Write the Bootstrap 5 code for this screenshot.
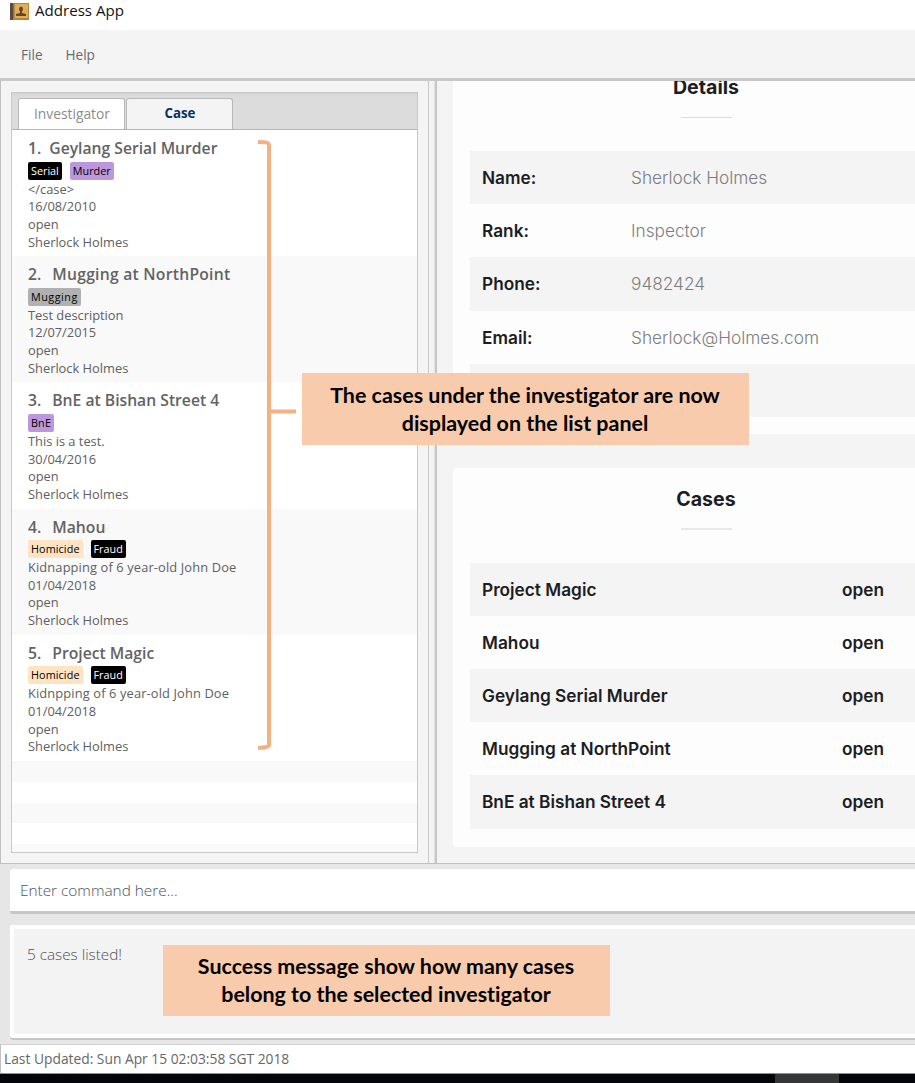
<!DOCTYPE html>
<html lang="en">
<head>
<meta charset="utf-8">
<meta name="viewport" content="width=device-width, initial-scale=1">
<title>Address App</title>
<link href="https://cdn.jsdelivr.net/npm/bootstrap@5.3.0/dist/css/bootstrap.min.css" rel="stylesheet">
<style>
body{font-family:"Open Sans","Noto Sans",sans-serif;font-size:13px;color:#606060;background:#e6e6e6;width:915px;height:1083px;overflow:hidden;line-height:1}
.titlebar{height:30px;background:#fff;color:#111;font-size:15.1px;padding:0 0 8px 10px;gap:5px}
.menubar{height:51px;background:#f4f4f4;border-bottom:3px solid #c8c8c8;padding:1px 0 0 21px;font-size:13.6px;color:#6a6a6a;gap:23px}
.workspace{height:783px;border-bottom:1px solid #bfbfbf;background:#f4f4f4}
.list-side{width:429px;padding:11px 10px 0 10px;border-left:1px solid #c0c0c0;border-right:1px solid #c8c8c8}
.tab-box{height:761px;border:1px solid #c8c8c8;background:#fff;overflow:hidden}
.tab-head{height:37px;background:linear-gradient(#d5d5d5,#dcdcdc 4px);border-bottom:1px solid #b5b5b5;padding-left:6px;gap:1px}
.tab-item{width:107px;height:31px;border:1px solid #b8b8b8;border-bottom:0;border-radius:3px 3px 0 0;background:#fff;font-size:13.8px;color:#8c8c8c;padding:0 0 0 1px}
.tab-item.current{background:#f4f4f4;color:#0a3060;font-weight:700;font-size:13.3px}
.case-cell{height:126.2px;padding:8px 0 0 16px}
.case-cell:nth-child(even){background:#f9f9f9}
.case-title{font-size:15.7px;font-weight:600;line-height:21px;height:23.5px;color:#636363}
.case-no{margin-right:11px}
.case-no.tight{margin-right:8px}
.spread{letter-spacing:.25px}
.tag{height:18px;line-height:18px;border-radius:2px;padding:0 3px;font-size:10.8px;color:#000}
.tag-wide{letter-spacing:.15px}
.tag-black{background:#000;color:#fff}.tag-purple{background:#bc97dc}.tag-grey{background:#b1b1b1;letter-spacing:.5px}.tag-peach{background:#ffe3c3;letter-spacing:.1px}
.case-line{line-height:17.7px;height:17.7px;font-size:12.85px;position:relative;top:1px}
.description{letter-spacing:.13px}
.filler{height:20.8px}.filler:nth-child(even){background:#f9f9f9}
.divider{width:8px;background:linear-gradient(90deg,#f4f4f4 70%,#dedede);border-right:2px solid #c6c6c6}
.browser{font-family:Inter,"Open Sans",sans-serif;color:#1c1d22;padding-left:16px;border-radius:0 0 0 3px;overflow:hidden}
.panel{width:507px;background:#fdfdfd;padding:0 0 0 17px}
.panel-a{height:353px}
.panel-b{height:379px;margin-top:34px;border-radius:4px}
.panel-title{width:472px;font-weight:700;font-size:19.6px;line-height:26px}
.title-a{height:36px;line-height:12px}
.title-b{height:60px;padding-top:18px}
.rule{width:51px;height:1px;background:#dedede;margin:0 0 33px 211px}
.rule.thick{height:2px;background:#e8e8e8;margin-bottom:32.7px}
.panel-row{height:53.2px;padding-left:12px;font-size:17.25px;font-weight:600}
.panel-row:nth-child(odd){background:#f4f4f4}
.label-col{width:149px}.name-col{width:360px}
.value-text{font-weight:300;color:#7d7d7d}
.command{height:45px;margin:5px 0 0 10px;background:#fff;border-bottom:3px solid #c6c6c6;border-radius:3px 0 0 3px;padding:2px 0 0 10px;font-size:15.35px;font-weight:300;color:#4b545c}
.result{height:113px;margin:11px 0 0 10px;background:#f3f3f3;border:4px solid #fff;border-right:0;border-radius:3px 0 0 3px;box-shadow:0 2px #c6c6c6;font-size:15.3px;font-weight:300;color:#505050;padding:18px 0 0 13px}
.statusbar{height:30px;margin-top:6px;background:#fff;border-top:1px solid #d0d0d0;border-left:1px solid #c0c0c0;border-bottom:1px solid #8f8f96;padding-left:3px;font-size:13.8px;color:#666}
.taskbar{height:10px;background:#02050a;padding-left:775px}
.task{width:64px;height:10px;background:#343638}
.callout{position:absolute;width:447px;background:#f8cbad;color:#000;font:700 21.45px/28px Lato,sans-serif;font-variant-ligatures:none;text-align:center}
.callout-a{left:302px;top:373px;height:72px;padding:8px 1px 0 0}
.callout-b{left:163px;top:945px;height:71px;padding:7px 1px 0 0}
.bracket{position:absolute;left:256px;top:138px}
</style>
</head>
<body class="position-relative d-flex flex-column">
<header class="titlebar d-flex align-items-center flex-shrink-0">
<svg width="20" height="18" viewBox="0 0 20 18"><path d="M0 1h4v17H0z" fill="#594b42"/><path d="M3 1h16v17H3z" fill="#b98235"/><path d="M4 2h14v14H4z" fill="#e0ae5a"/><path d="M4 2v14" stroke="#8d6739"/><ellipse cx="11" cy="7" rx="2" ry="2.500" fill="#654523"/><path d="M10 8h2v3l4 1v2H6v-2l4-1z" fill="#654523"/></svg>
<span>Address App</span>
</header>
<nav class="menubar d-flex align-items-center flex-shrink-0"><span>File</span><span>Help</span></nav>
<main class="workspace d-flex flex-shrink-0">
<section class="list-side flex-shrink-0">
<div class="tab-box">
<div class="tab-head d-flex align-items-end"><div class="tab-item d-flex align-items-center justify-content-center">Investigator</div><div class="tab-item current d-flex align-items-center justify-content-center">Case</div></div>
<div>
<article class="case-cell"><div class="case-title"><span class="case-no tight">1.</span>Geylang Serial Murder</div><div class="d-flex gap-2"><span class="tag tag-black">Serial</span><span class="tag tag-purple">Murder</span></div><div class="case-line">&lt;/case&gt;</div><div class="case-line">16/08/2010</div><div class="case-line">open</div><div class="case-line">Sherlock Holmes</div></article>
<article class="case-cell"><div class="case-title"><span class="case-no">2.</span><span class="spread">Mugging at NorthPoint</span></div><div class="d-flex gap-2"><span class="tag tag-grey">Mugging</span></div><div class="case-line">Test description</div><div class="case-line">12/07/2015</div><div class="case-line">open</div><div class="case-line">Sherlock Holmes</div></article>
<article class="case-cell"><div class="case-title"><span class="case-no">3.</span>BnE at Bishan Street 4</div><div class="d-flex gap-2"><span class="tag tag-purple tag-wide">BnE</span></div><div class="case-line">This is a test.</div><div class="case-line">30/04/2016</div><div class="case-line">open</div><div class="case-line">Sherlock Holmes</div></article>
<article class="case-cell"><div class="case-title"><span class="case-no">4.</span>Mahou</div><div class="d-flex gap-2"><span class="tag tag-peach">Homicide</span><span class="tag tag-black">Fraud</span></div><div class="case-line description">Kidnapping of 6 year-old John Doe</div><div class="case-line">01/04/2018</div><div class="case-line">open</div><div class="case-line">Sherlock Holmes</div></article>
<article class="case-cell"><div class="case-title"><span class="case-no">5.</span>Project Magic</div><div class="d-flex gap-2"><span class="tag tag-peach">Homicide</span><span class="tag tag-black">Fraud</span></div><div class="case-line description">Kidnpping of 6 year-old John Doe</div><div class="case-line">01/04/2018</div><div class="case-line">open</div><div class="case-line">Sherlock Holmes</div></article>
<div class="filler"></div><div class="filler"></div><div class="filler"></div><div class="filler"></div><div class="filler"></div>
</div>
</div>
</section>
<div class="divider flex-shrink-0"></div>
<section class="browser flex-grow-1">
<div class="panel panel-a">
<div class="panel-title title-a text-center">Details</div><div class="rule"></div>
<div>
<div class="panel-row d-flex align-items-center"><span class="label-col">Name:</span><span class="value-text">Sherlock Holmes</span></div>
<div class="panel-row d-flex align-items-center"><span class="label-col">Rank:</span><span class="value-text">Inspector</span></div>
<div class="panel-row d-flex align-items-center"><span class="label-col">Phone:</span><span class="value-text">9482424</span></div>
<div class="panel-row d-flex align-items-center"><span class="label-col">Email:</span><span class="value-text">Sherlock@Holmes.com</span></div>
<div class="panel-row"></div>
</div>
</div>
<div class="panel panel-b">
<div class="panel-title title-b text-center">Cases</div><div class="rule thick"></div>
<div>
<div class="panel-row d-flex align-items-center"><span class="name-col">Project Magic</span><span>open</span></div>
<div class="panel-row d-flex align-items-center"><span class="name-col">Mahou</span><span>open</span></div>
<div class="panel-row d-flex align-items-center"><span class="name-col">Geylang Serial Murder</span><span>open</span></div>
<div class="panel-row d-flex align-items-center"><span class="name-col">Mugging at NorthPoint</span><span>open</span></div>
<div class="panel-row d-flex align-items-center"><span class="name-col">BnE at Bishan Street 4</span><span>open</span></div>
</div>
</div>
</section>
</main>
<div class="command d-flex align-items-center flex-shrink-0">Enter command here...</div>
<div class="result flex-shrink-0">5 cases listed!</div>
<footer class="statusbar d-flex align-items-center flex-shrink-0">Last Updated: Sun Apr 15 02:03:58 SGT 2018</footer>
<div class="taskbar flex-shrink-0"><div class="task"></div></div>
<svg class="bracket" width="42" height="614" viewBox="0 0 42 614" fill="none" stroke="#f4b183" stroke-width="4"><path d="M2 4C8 4 13 4 13 7V607C13 609 9 609.500 2 610M13 273.500H40"/></svg>
<div class="callout callout-a">The cases under the investigator are now<br>displayed on the list panel</div>
<div class="callout callout-b">Success message show how many cases<br>belong to the selected investigator</div>
<script src="https://cdn.jsdelivr.net/npm/bootstrap@5.3.0/dist/js/bootstrap.bundle.min.js"></script>
</body>
</html>
